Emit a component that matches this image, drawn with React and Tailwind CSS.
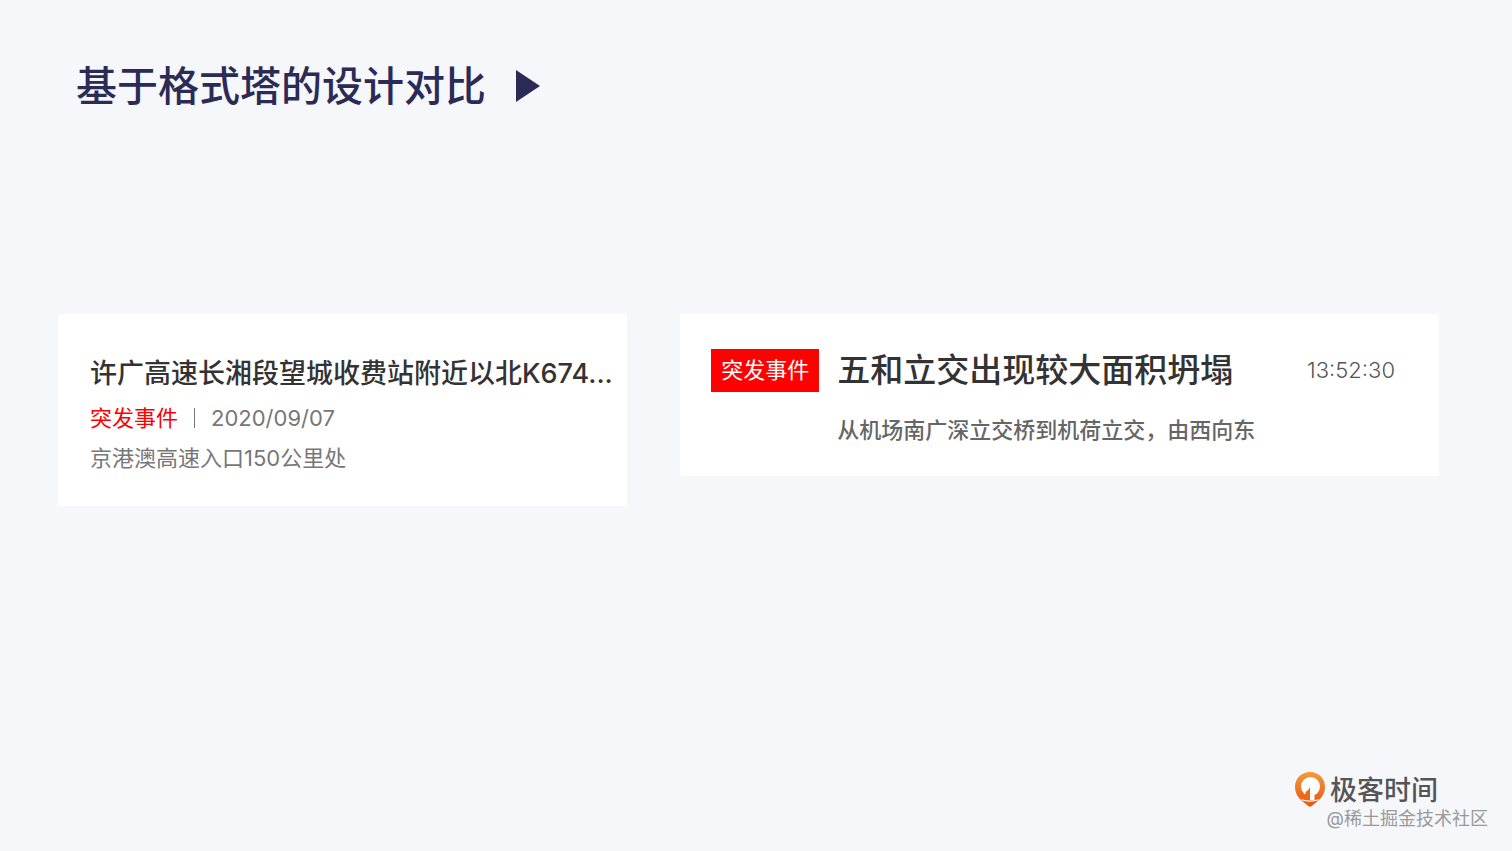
import React from 'react';

function Logo() {
  return (
    <svg viewBox="0 0 32 36" className="h-9 w-8" aria-hidden="true">
      <defs>
        <linearGradient id="logoFill" x1="0" y1="0" x2="0" y2="1">
          <stop offset="0" stopColor="#f6983c" />
          <stop offset="1" stopColor="#e8560f" />
        </linearGradient>
      </defs>
      <path
        fill="url(#logoFill)"
        d="M16 1C7.500 1 1 7.600 1 16c0 6.500 3.500 11.500 9 15.500l4.300 3.600c1 .800 2.400.800 3.400 0L22 31.500c5.500-4 9-9 9-15.500C31 7.600 24.500 1 16 1z"
      />
      <circle cx="16.500" cy="15.500" r="9.500" fill="#fff" />
      <path fill="#fff" d="M16 18h4.500v11h-4.500z" />
      <path fill="#ec6a1c" d="M16 16v12.800c-4 0-7.500-2-9.500-5.300l3 .500c.800-.200 1.500-.500 2-1v-2c2-1 3.500-2.800 4.500-5z" />
      <path fill="none" stroke="#fff" strokeWidth="1.200" d="M7.500 28.700c5.500 1.800 11.500 1.800 17 0" />
    </svg>
  );
}

function EventCard({ title, tag, date, address }) {
  return (
    <article className="min-w-0 rounded-xs bg-white pt-10 pr-2 pb-7 pl-8">
      <h2 className="truncate text-[27px] leading-10 font-medium text-[#333]">{title}</h2>
      <div className="mt-1 flex items-center gap-4 text-[22px] leading-10">
        <span className="text-[#f00]">{tag}</span>
        <span className="h-5 w-px bg-[#777]" />
        <time className="text-[#777]">{date}</time>
      </div>
      <p className="text-[22px] leading-10 text-[#777]">{address}</p>
    </article>
  );
}

function AlertCard({ title, tag, time, detail }) {
  return (
    <article className="flex min-w-0 items-start rounded-xs bg-white pt-[35px] pr-11 pb-7 pl-[31px]">
      <span className="shrink-0 bg-[#f00] px-[10px] text-[22px] leading-[43px] text-white">{tag}</span>
      <div className="ml-[18px] min-w-0 flex-1">
        <div className="flex items-center justify-between">
          <h2 className="text-[33px] leading-[43px] font-medium text-[#333]">{title}</h2>
          <time className="text-[22px] font-light text-[#555]">{time}</time>
        </div>
        <p className="mt-5 text-[22px] leading-[36px] font-medium text-[#666]">{detail}</p>
      </div>
    </article>
  );
}

export default function App() {
  return (
    <div className="flex min-h-screen flex-col bg-[#f5f7fb] font-['Inter','Noto_Sans_CJK_SC',sans-serif]">
      <header className="flex items-center gap-[30px] px-[76px] pt-14">
        <h1 className="text-[41px] leading-[60px] font-medium text-[#2b2b55]">基于格式塔的设计对比</h1>
        <svg viewBox="0 0 24 32" className="h-8 w-6 text-[#2b2b55]" aria-hidden="true">
          <path fill="currentColor" d="M0 0l24 16L0 32z" />
        </svg>
      </header>

      <main className="mt-[198px] grid grid-cols-[3fr_4fr] items-start gap-[53px] pr-[73px] pl-[58px]">
        <EventCard
          title="许广高速长湘段望城收费站附近以北K674..."
          tag="突发事件"
          date="2020/09/07"
          address="京港澳高速入口150公里处"
        />
        <AlertCard
          title="五和立交出现较大面积坍塌"
          tag="突发事件"
          time="13:52:30"
          detail="从机场南广深立交桥到机荷立交，由西向东"
        />
      </main>

      <footer className="mt-auto flex flex-col items-end pb-6">
        <div className="flex items-start gap-1 pr-[74px]">
          <Logo />
          <span className="text-[27px] leading-10 font-medium text-[#555]">极客时间</span>
        </div>
        <span className="pr-6 text-[18px] leading-4 text-[#999]">@稀土掘金技术社区</span>
      </footer>
    </div>
  );
}
